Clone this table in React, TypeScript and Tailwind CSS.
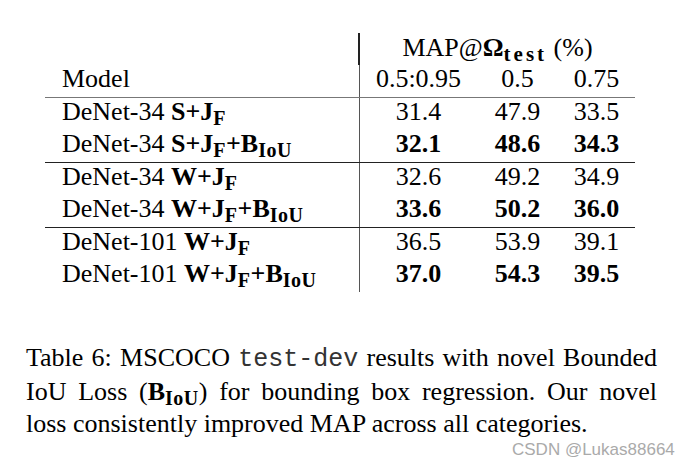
import React from 'react'

type Row = {
  model: string
  kind: 'S' | 'W'
  biou: boolean
  values: string[]
}

const groups: Row[][] = [
  [
    { model: 'DeNet-34', kind: 'S', biou: false, values: ['31.4', '47.9', '33.5'] },
    { model: 'DeNet-34', kind: 'S', biou: true, values: ['32.1', '48.6', '34.3'] },
  ],
  [
    { model: 'DeNet-34', kind: 'W', biou: false, values: ['32.6', '49.2', '34.9'] },
    { model: 'DeNet-34', kind: 'W', biou: true, values: ['33.6', '50.2', '36.0'] },
  ],
  [
    { model: 'DeNet-101', kind: 'W', biou: false, values: ['36.5', '53.9', '39.1'] },
    { model: 'DeNet-101', kind: 'W', biou: true, values: ['37.0', '54.3', '39.5'] },
  ],
]

const colWidths = ['w-[117px]', 'w-[81px]', 'w-[77px]']

function Sub({ children }: { children: React.ReactNode }) {
  return <sub className="text-[20px] font-bold bottom-[-5px] tracking-[0.5px]">{children}</sub>
}

function ModelCell({ row }: { row: Row }) {
  return (
    <span>
      {row.model}{' '}
      <b className="font-bold">
        {row.kind}+J<Sub>F</Sub>
        {row.biou && (
          <>
            +B<Sub>IoU</Sub>
          </>
        )}
      </b>
    </span>
  )
}

export default function App() {
  return (
    <div className="relative w-[688px] h-[466px] overflow-hidden bg-white text-black font-['Liberation_Serif',serif] text-[26px]">
      {/* Table */}
      <div className="pt-[33px] pl-[45px] w-[635px]">
        <div className="flex h-[32px] leading-[28px]">
          <div className="w-[315px] border-r-2 border-[#222]" />
          <div className="flex-1 text-center pt-[1px]">
            MAP@<b className="font-bold">Ω<sub className="text-[21px] font-bold bottom-[-5px] tracking-[3px]">test</sub></b> (%)
          </div>
        </div>
        <div className="flex h-[32px] leading-[28px]">
          <div className="w-[315px] pl-[17px] border-r border-[#555]">Model</div>
          <div className={`${colWidths[0]} text-center`}>0.5:0.95</div>
          <div className={`${colWidths[1]} text-center`}>0.5</div>
          <div className={`${colWidths[2]} text-center`}>0.75</div>
        </div>

        {groups.map((group, gi) => (
          <div key={gi} className={gi === 0 ? 'border-t border-[#777]' : 'border-t border-[#222]'}>
            {group.map((row, ri) => (
              <div key={ri} className="flex h-[32px] leading-[28px]">
                <div className="w-[315px] pl-[17px] border-r border-[#555] whitespace-nowrap">
                  <ModelCell row={row} />
                </div>
                {row.values.map((v, vi) => (
                  <div key={vi} className={`${colWidths[vi]} text-center ${row.biou ? 'font-bold' : ''}`}>
                    {v}
                  </div>
                ))}
              </div>
            ))}
          </div>
        ))}
      </div>

      {/* Caption */}
      <div className="mt-[50px] ml-[26px] w-[631px] leading-[32px]">
        <div className="text-justify [text-align-last:justify]">
          Table 6: MSCOCO{' '}
          <span className="font-['Liberation_Mono',monospace] text-[25px] text-[#333]">test-dev</span> results with novel
          Bounded
        </div>
        <div className="text-justify [text-align-last:justify]">
          IoU Loss (<b className="font-bold">B<Sub>IoU</Sub></b>) for bounding box regression. Our novel
        </div>
        <div>loss consistently improved MAP across all categories.</div>
      </div>

      {/* Watermark */}
      <div className="absolute left-[512px] top-[441px] font-['Liberation_Sans',sans-serif] text-[17px] leading-[17px] text-[#aaaaaa]">
        CSDN @Lukas88664
      </div>
    </div>
  )
}
